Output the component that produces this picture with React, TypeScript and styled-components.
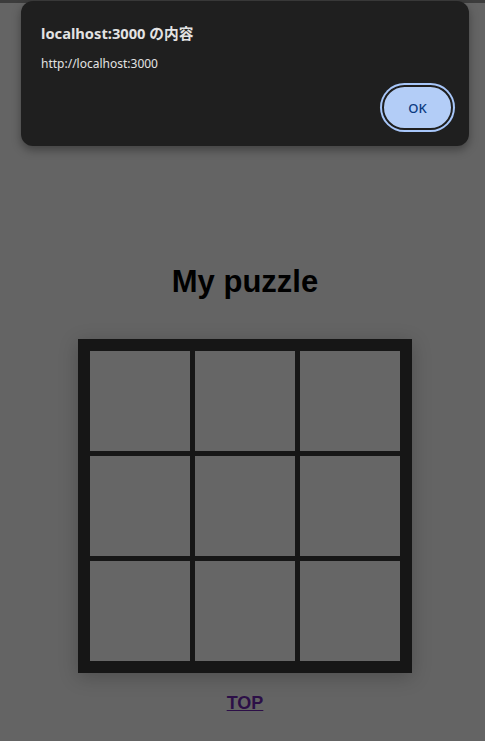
import styled, { createGlobalStyle } from 'styled-components'

const GlobalStyle = createGlobalStyle`
  html, body {
    margin: 0;
    padding: 0;
    background: #646464;
  }
  body {
    font-family: "Liberation Sans", Arial, sans-serif;
  }
`

const Page = styled.div`
  position: relative;
  min-height: 741px;
  background: #646464;
`

const TopStrip = styled.div`
  height: 3px;
  background: #3c3c3c;
`

const Main = styled.main`
  display: flex;
  flex-direction: column;
  align-items: center;
  padding: 261px 0 0 5px;
`

const Title = styled.h1`
  margin: 0 0 39px 0;
  font-size: 31px;
  font-weight: 700;
  color: #000;
`

const Board = styled.div`
  display: grid;
  grid-template-columns: repeat(3, 100px);
  grid-template-rows: repeat(3, 100px);
  gap: 5px;
  padding: 12px;
  background: #161616;
  box-shadow: 0 4px 18px rgba(0, 0, 0, 0.22);
`

const Cell = styled.div`
  background: #666666;
`

const TopLink = styled.a`
  margin-top: 20px;
  font-size: 18px;
  font-weight: 700;
  color: #2c0f47;
  text-decoration: underline;
`

const Dialog = styled.div`
  position: absolute;
  top: 1px;
  left: 21px;
  width: 448px;
  height: 145px;
  box-sizing: border-box;
  padding: 22px 17px 16px 20px;
  background: #1f1f1f;
  border-radius: 12px;
  box-shadow: 0 4px 10px rgba(0, 0, 0, 0.35);
  font-family: "Noto Sans", "Noto Sans CJK JP", sans-serif;
  display: flex;
  flex-direction: column;
`

const DialogTitle = styled.div`
  font-size: 14.7px;
  font-weight: 700;
  color: #e3e3e3;
  line-height: 20px;
`

const DialogMessage = styled.div`
  margin-top: 12px;
  font-size: 12px;
  color: #e3e3e3;
  line-height: 18px;
`

const Actions = styled.div`
  margin-top: auto;
  display: flex;
  justify-content: flex-end;
`

const OkButton = styled.button`
  width: 71px;
  height: 45px;
  box-sizing: border-box;
  border-radius: 23px;
  border: 2px solid #1f1f1f;
  box-shadow: 0 0 0 2px #a8c7fa;
  background: #b3cdf7;
  color: #0b3a80;
  font-family: "Noto Sans", sans-serif;
  font-size: 13px;
  font-weight: 500;
  padding: 0;
  margin-right: -1px;
`

export default function App() {
  return (
    <>
      <GlobalStyle />
      <Page>
        <TopStrip />
        <Main>
          <Title>My puzzle</Title>
          <Board>
            {Array.from({ length: 9 }).map((_, i) => (
              <Cell key={i} />
            ))}
          </Board>
          <TopLink href="#">TOP</TopLink>
        </Main>
        <Dialog>
          <DialogTitle>localhost:3000 の内容</DialogTitle>
          <DialogMessage>http://localhost:3000</DialogMessage>
          <Actions>
            <OkButton>OK</OkButton>
          </Actions>
        </Dialog>
      </Page>
    </>
  )
}
